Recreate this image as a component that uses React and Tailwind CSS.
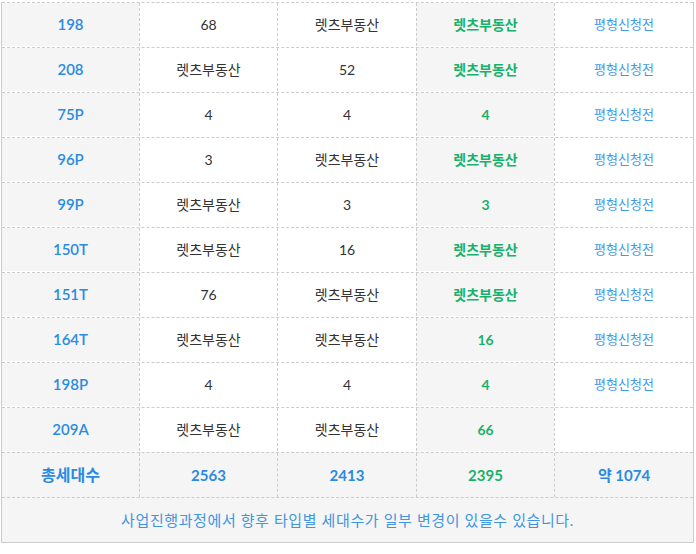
import React from "react";

const rows = [
  ["198", "68", "렛츠부동산", "렛츠부동산", "평형신청전"],
  ["208", "렛츠부동산", "52", "렛츠부동산", "평형신청전"],
  ["75P", "4", "4", "4", "평형신청전"],
  ["96P", "3", "렛츠부동산", "렛츠부동산", "평형신청전"],
  ["99P", "렛츠부동산", "3", "3", "평형신청전"],
  ["150T", "렛츠부동산", "16", "렛츠부동산", "평형신청전"],
  ["151T", "76", "렛츠부동산", "렛츠부동산", "평형신청전"],
  ["164T", "렛츠부동산", "렛츠부동산", "16", "평형신청전"],
  ["198P", "4", "4", "4", "평형신청전"],
  ["209A", "렛츠부동산", "렛츠부동산", "66", ""],
];

const font = { fontFamily: '"Lato", "Noto Sans CJK KR", sans-serif' };

export default function App() {
  return (
    <div className="bg-white w-[696px] h-[554px] pt-[2px] pl-px" style={font}>
      <div className="w-[693px] border-x border-b border-[#cccccc]">
        {rows.map((r, i) => (
          <div key={i} className="grid grid-cols-[137px_138px_139px_138px_139px] h-[45px] border-t border-dashed border-[#cccccc] pb-px">
            <div className="flex items-center justify-center bg-[#f5f5f5] text-[#2a8be2] text-[15px] font-semibold">{r[0]}</div>
            <div className="flex items-center justify-center border-l border-dashed border-[#cccccc] bg-white text-[#333] text-[14px]">{r[1]}</div>
            <div className="flex items-center justify-center border-l border-dashed border-[#cccccc] bg-white text-[#333] text-[14px]">{r[2]}</div>
            <div className="flex items-center justify-center border-l border-dashed border-[#cccccc] bg-[#f5f5f5] text-[#17b26a] text-[14px] font-bold">{r[3]}</div>
            <div className="flex items-center justify-center border-l border-dashed border-[#cccccc] bg-white text-[#3f9ae8] text-[13px]">{r[4]}</div>
          </div>
        ))}
        <div className="grid grid-cols-[137px_138px_139px_138px_139px] h-[45px] border-t border-dashed border-[#cccccc] bg-[#f5f5f5] text-[15px] font-bold">
          <div className="flex items-center justify-center text-[#2a8be2] text-[16px]">총세대수</div>
          <div className="flex items-center justify-center border-l border-dashed border-[#cccccc] text-[#2a8be2]">2563</div>
          <div className="flex items-center justify-center border-l border-dashed border-[#cccccc] text-[#2a8be2]">2413</div>
          <div className="flex items-center justify-center border-l border-dashed border-[#cccccc] text-[#17b26a]">2395</div>
          <div className="flex items-center justify-center border-l border-dashed border-[#cccccc] text-[#2a8be2]">약 1074</div>
        </div>
        <div className="h-[45px] border-t border-dashed border-[#cccccc] bg-[#f5f5f5] flex items-center justify-center text-[15px] tracking-[0.6px] text-[#3f95e0]">
          사업진행과정에서 향후 타입별 세대수가 일부 변경이 있을수 있습니다.
        </div>
      </div>
    </div>
  );
}
